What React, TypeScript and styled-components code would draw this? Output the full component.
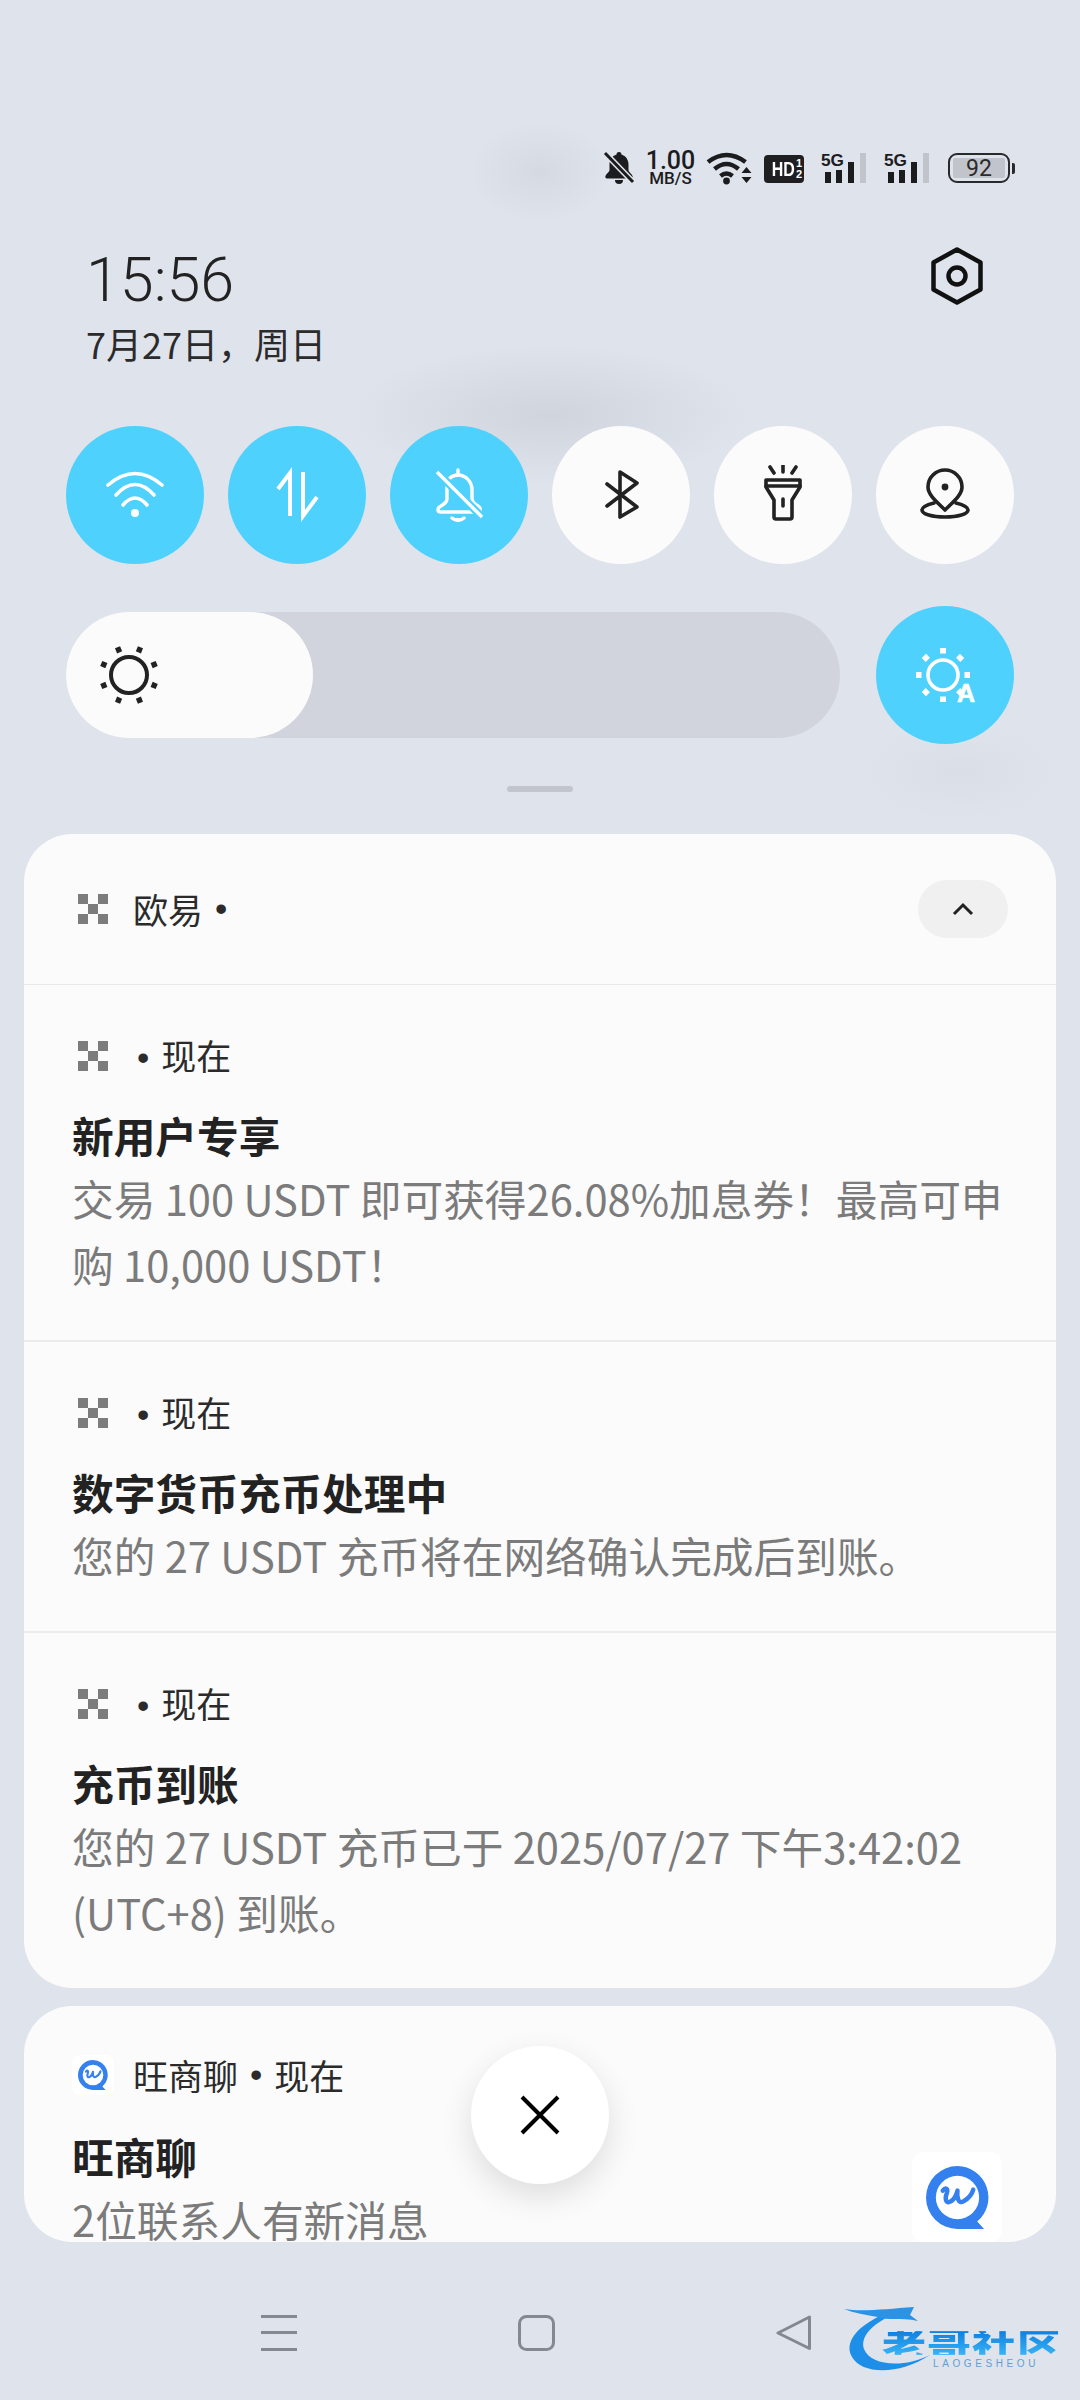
import React from 'react';
import styled, { createGlobalStyle } from 'styled-components';

const GlobalStyle = createGlobalStyle`
    html, body {
        margin: 0;
        padding: 0;
        background: #dfe3eb;
    }
    * {
        box-sizing: border-box;
    }
`;

const CJK = `"Noto Sans CJK SC", "Noto Sans", sans-serif`;

const Page = styled.div`
    position: relative;
    width: 1080px;
    height: 2400px;
    overflow: hidden;
    font-family: ${CJK};
    background:
        radial-gradient(ellipse 70px 50px at 540px 172px, #d5d9e1 0%, rgba(213,217,225,0) 100%),
        radial-gradient(ellipse 200px 70px at 550px 415px, #d0d4dc 0%, rgba(208,212,220,0) 100%),
        radial-gradient(ellipse 100px 50px at 960px 772px, #dadee6 0%, rgba(218,222,230,0) 100%),
        #dfe3eb;
`;

const StatusBar = styled.div`
    display: flex;
    justify-content: flex-end;
    align-items: center;
    gap: 12px;
    height: 36px;
    margin-top: 150px;
    padding-right: 65px;
    color: #1c1c1e;
`;

const Speed = styled.div`
    display: flex;
    flex-direction: column;
    align-items: center;
    width: 47px;
    font-family: Roboto, sans-serif;
    font-weight: 500;
`;

const SpeedValue = styled.span`
    font-size: 25px;
    line-height: 20px;
`;

const SpeedUnit = styled.span`
    font-size: 17px;
    line-height: 15px;
`;

const HdBadge = styled.div`
    display: flex;
    align-items: center;
    justify-content: center;
    width: 40px;
    height: 28px;
    margin-top: 2px;
    border-radius: 4px;
    background: #1f1f21;
    color: #fff;
    font-family: "Liberation Sans", sans-serif;
    font-weight: 700;
`;

const HdText = styled.span`
    font-size: 20px;
    line-height: 1;
    transform: scaleX(0.8);
    transform-origin: right center;
`;

const HdSub = styled.span`
    display: flex;
    flex-direction: column;
    align-items: center;
    font-size: 11px;
    line-height: 11px;
    margin-left: 1px;
`;

const Signal = styled.svg`
    margin-left: 5px;
`;

const Battery = styled.div`
    display: flex;
    align-items: center;
    margin-left: 6px;
`;

const BatteryBody = styled.div`
    display: flex;
    align-items: center;
    justify-content: center;
    width: 62px;
    height: 30px;
    padding: 3px;
    border: 2.5px solid #2a2a2c;
    border-radius: 9px;
`;

const BatteryFill = styled.div`
    display: flex;
    align-items: center;
    justify-content: center;
    width: 100%;
    height: 100%;
    border-radius: 2px;
    background: #c1c4ca;
    color: #2a2a2c;
    font-family: Roboto, sans-serif;
    font-size: 23px;
    line-height: 1;
`;

const BatteryNub = styled.div`
    width: 3px;
    height: 11px;
    margin-left: 2px;
    border-radius: 0 2px 2px 0;
    background: #2a2a2c;
`;

const ClockRow = styled.div`
    display: flex;
    justify-content: space-between;
    height: 240px;
    padding: 64px 97px 0 86px;
`;

const ClockText = styled.div`
    display: flex;
    flex-direction: column;
`;

const Time = styled.div`
    font-family: Roboto, sans-serif;
    font-weight: 300;
    font-size: 61px;
    line-height: 60px;
    color: #222;
`;

const DateLine = styled.div`
    margin-top: 11px;
    font-size: 36px;
    line-height: 44px;
    color: #2b2b2b;
`;

const SettingsIcon = styled.svg`
    margin-top: -3px;
`;

const Toggles = styled.div`
    display: flex;
    gap: 24px;
    padding: 0 66px;
`;

const Toggle = styled.div<{ $on?: boolean }>`
    display: flex;
    align-items: center;
    justify-content: center;
    flex: none;
    width: 138px;
    height: 138px;
    border-radius: 50%;
    background: ${p => (p.$on ? '#4fd1fe' : '#fbfbfb')};
    color: ${p => (p.$on ? '#fff' : '#222')};
`;

const BrightnessRow = styled.div`
    display: flex;
    align-items: center;
    gap: 36px;
    margin-top: 42px;
    padding: 0 66px;
`;

const Slider = styled.div`
    flex: 1;
    height: 126px;
    border-radius: 63px;
    background: #d1d4dc;
`;

const SliderFill = styled.div`
    display: flex;
    align-items: center;
    width: 247px;
    height: 100%;
    padding-left: 33px;
    border-radius: 63px;
    background: #fbfbfb;
    color: #222;
`;

const Handle = styled.div`
    width: 66px;
    height: 6px;
    margin: 42px auto 0;
    border-radius: 3px;
    background: #c2c5cc;
`;

const Cards = styled.div`
    display: flex;
    flex-direction: column;
    gap: 18px;
    margin: 42px 24px 0;
`;

const Card = styled.div<{ $clip?: boolean }>`
    position: relative;
    overflow: hidden;
    border-radius: 48px;
    background: #fbfbfb;
    ${p => p.$clip && 'height: 236px;'}
`;

const GroupHeader = styled.div`
    display: flex;
    align-items: center;
    justify-content: space-between;
    height: 151px;
    padding: 0 48px;
    border-bottom: 1px solid #e9e9e9;
`;

const Collapse = styled.div`
    display: flex;
    align-items: center;
    justify-content: center;
    width: 90px;
    height: 58px;
    border-radius: 29px;
    background: #f0f0f0;
`;

const Notification = styled.div`
    padding: 49px 48px 43px;
    & + & {
        border-top: 2px solid #ececec;
    }
    &:first-of-type {
        padding-bottom: 44px;
    }
`;

const ChatNotification = styled.div`
    padding: 47px 48px 0;
`;

const Meta = styled.div`
    display: flex;
    align-items: center;
    height: 44px;
    font-size: 35px;
    line-height: 44px;
    color: #2b2b2b;
`;

const OkxMark = styled.svg`
    flex: none;
    margin-left: 6px;
`;

const ChatMark = styled.div`
    display: flex;
    align-items: center;
    justify-content: center;
    flex: none;
    width: 42px;
    height: 40px;
    margin-right: 19px;
    background: #fff;
    border-radius: 8px;
`;

const Separator = styled.span`
    font-family: "Liberation Sans", sans-serif;
    margin: 0 12px;
`;

const MetaLabel = styled.span`
    margin-left: 25px;
`;

const MetaTime = styled.span`
    margin-left: 17px;
`;

const Title = styled.div<{ $tight?: boolean }>`
    margin-top: ${p => (p.$tight ? 29 : 27)}px;
    font-size: 41.7px;
    font-weight: 700;
    line-height: 60px;
    color: #222;
`;

const Body = styled.div`
    font-size: 41.7px;
    line-height: 66px;
    color: #7b7b7b;
    white-space: nowrap;
`;

const LargeIcon = styled.div`
    position: absolute;
    right: 54px;
    bottom: 0;
    display: flex;
    align-items: center;
    justify-content: center;
    width: 90px;
    height: 90px;
    border-radius: 12px;
    background: #fff;
`;

const CloseButton = styled.div`
    position: absolute;
    left: 471px;
    top: 2046px;
    display: flex;
    align-items: center;
    justify-content: center;
    width: 138px;
    height: 138px;
    border-radius: 50%;
    background: #fff;
    box-shadow: 0 12px 32px rgba(0, 0, 0, 0.12);
`;

const NavBar = styled.div`
    display: flex;
    justify-content: space-between;
    align-items: center;
    height: 36px;
    margin-top: 73px;
    padding: 0 268px 0 261px;
`;

const Watermark = styled.div`
    position: absolute;
    left: 842px;
    top: 2303px;
    width: 224px;
    height: 76px;
`;

const WatermarkSwoosh = styled.svg`
    position: absolute;
    left: 0;
    top: 0;
`;

const WatermarkText = styled.div`
    position: absolute;
    left: 40px;
    top: 24px;
    width: 184px;
    height: 32px;
    font-size: 44px;
    font-weight: 900;
    line-height: 32px;
    letter-spacing: 1px;
    white-space: nowrap;
    transform: scaleY(0.74);
    background: linear-gradient(180deg, #0f7fe0 0%, #38b4f5 100%);
    -webkit-background-clip: text;
    background-clip: text;
    color: transparent;
`;

const WatermarkSub = styled.div`
    position: absolute;
    left: 91px;
    top: 56px;
    font-family: "Liberation Sans", sans-serif;
    font-size: 10px;
    line-height: 10px;
    letter-spacing: 3.6px;
    color: #5f9fd6;
`;

const Glyph = ({ size = 60, children, stroke = 3.6 }: { size?: number; children: React.ReactNode; stroke?: number }) => (
    <svg width={size} height={size} viewBox="-30 -30 60 60" fill="none" stroke="currentColor" strokeWidth={stroke} strokeLinecap="round" strokeLinejoin="round">
        {children}
    </svg>
);

const WifiGlyph = () => (
    <Glyph>
        <path d="M-27 -10Q0 -33 27 -10" />
        <path d="M-19 0Q0 -21 19 0" />
        <path d="M-12 10Q0 -4 12 10" />
        <circle cx="0" cy="18" r="4" fill="currentColor" stroke="none" />
    </Glyph>
);

const DataGlyph = () => (
    <Glyph stroke={4}>
        <path d="M-7 21V-22L-19 -6" strokeLinecap="butt" strokeLinejoin="miter" />
        <path d="M6 -23V21L20 2" strokeLinecap="butt" strokeLinejoin="miter" />
    </Glyph>
);

const BellOffGlyph = () => (
    <Glyph stroke={3.4}>
        <path d="M-12 -8V4C-12 8 -15 9 -18 11C-22 13 -22 17 -18 17H18C22 17 22 13 19 11C15 9 13 7 13 3V-5C13 -14 6 -20 -1 -20C-4 -20 -7 -19 -9 -17" />
        <path d="M-1 -25V-20" />
        <path d="M-7 23Q-1 28 5 23" fill="currentColor" />
        <path d="M-22 -23L23 22" stroke="#4fd1fe" strokeWidth="8" />
        <path d="M-22 -23L23 22" strokeLinecap="butt" />
    </Glyph>
);

const BluetoothGlyph = () => (
    <Glyph>
        <path d="M-14 -11L16 12L-1 22V-23L16 -12L-14 11" />
    </Glyph>
);

const TorchGlyph = () => (
    <Glyph>
        <path d="M-17 -15H17V-8L9 5V22A2 2 0 0 1 7 24H-7A2 2 0 0 1 -9 22V5L-17 -8Z" />
        <path d="M-17 -9H17" />
        <path d="M0 4V11" />
        <path d="M0 -32V-23" />
        <path d="M-13 -28L-9 -22" />
        <path d="M13 -28L9 -22" />
    </Glyph>
);

const LocationGlyph = () => (
    <Glyph>
        <path d="M0 15C-8 7 -17 0 -17 -8A17 17 0 0 1 17 -8C17 0 8 7 0 15Z" />
        <circle cx="0" cy="-8" r="3.4" fill="currentColor" stroke="none" />
        <path d="M-11 8C-19 10 -23 12 -23 15C-23 19 -13 22 0 22C13 22 23 19 23 15C23 12 19 10 11 8" />
    </Glyph>
);

const rays = (offset: number) => [0, 45, 90, 135, 180, 225, 270, 315].map(a => a + offset);

const SunGlyph = () => (
    <Glyph>
        <circle cx="0" cy="0" r="18" strokeWidth="4" />
        {rays(22.5).map(a => (
            <path key={a} d="M0 -24.5V-30" strokeWidth="5.5" strokeLinecap="butt" transform={`rotate(${a})`} />
        ))}
    </Glyph>
);

const AutoSunGlyph = () => (
    <svg width="72" height="72" viewBox="-34 -36 72 72" fill="none" stroke="currentColor">
        <circle cx="0" cy="0" r="15" strokeWidth="3.6" />
        {rays(0).map(a => (
            <path key={a} d="M0 -21.5V-27" strokeWidth="6" transform={`rotate(${a})`} />
        ))}
        <text x="23" y="27" textAnchor="middle" fill="currentColor" stroke="currentColor" strokeWidth="0.6" fontFamily="Liberation Sans, sans-serif" fontWeight="700" fontSize="25">A</text>
    </svg>
);

const OkxLogo = () => (
    <OkxMark width="30" height="30" viewBox="0 0 30 30" fill="#7c7c7c">
        <rect x="0" y="0" width="10" height="10" />
        <rect x="20" y="0" width="10" height="10" />
        <rect x="10" y="10" width="10" height="10" />
        <rect x="0" y="20" width="10" height="10" />
        <rect x="20" y="20" width="10" height="10" />
    </OkxMark>
);

const ChatLogo = ({ size }: { size: number }) => (
    <svg width={size} height={size} viewBox="0 0 64 64">
        <path d="M32 0A32 32 0 1 0 32 64H59L52 56.5A32 32 0 0 0 32 0Z" fill="#3480ee" />
        <circle cx="32" cy="32" r="22" fill="#fff" />
        <path d="M17 25C20 21 23 23 21 28C19 33 20 39 25 36C29 34 31 29 32 25C31 32 33 39 38 36C43 33 47 28 48 24" fill="none" stroke="#3480ee" strokeWidth="4.5" strokeLinecap="round" strokeLinejoin="round" />
    </svg>
);

const SignalIcon = () => (
    <Signal width="46" height="32" viewBox="0 0 46 32">
        <text x="0" y="13.500" fill="#1c1c1e" fontFamily="Liberation Sans, sans-serif" fontWeight="700" fontSize="17" textLength="23" lengthAdjust="spacingAndGlyphs">5G</text>
        <rect x="4" y="20" width="6" height="11" fill="#1c1c1e" />
        <rect x="15" y="18" width="6" height="13" fill="#1c1c1e" />
        <rect x="27" y="10" width="6" height="21" fill="#1c1c1e" />
        <rect x="39" y="1" width="6" height="30" fill="#c1c4ca" />
    </Signal>
);

const StatusIcons = () => (
    <StatusBar>
        <svg width="32" height="34" viewBox="0 0 30 34">
            <path d="M15 1a2.4 2.4 0 0 1 2.4 2.6C22 5 24.500 9 24.500 13.500V19c0 2 3 3.500 4 6 .5 1.500 0 2.500-1.500 2.500H3C1.500 27.500 1 26.500 1.500 25c1-2.500 4-4 4-6V13.500C5.500 9 8 5 12.600 3.600A2.400 2.400 0 0 1 15 1Z" fill="#1c1c1e" />
            <path d="M11 29h8a4 4 0 0 1-8 0Z" fill="#1c1c1e" />
            <path d="M1 2L29 31" stroke="#dfe3eb" strokeWidth="6" />
            <path d="M1 2L29 31" stroke="#1c1c1e" strokeWidth="3" />
        </svg>
        <Speed>
            <SpeedValue>1.00</SpeedValue>
            <SpeedUnit>MB/S</SpeedUnit>
        </Speed>
        <svg width="46" height="34" viewBox="0 0 45 34" fill="none" stroke="#1c1c1e">
            <path d="M1.500 11Q20 -3 39 11" strokeWidth="4.500" />
            <path d="M8 18Q20 8 32 18" strokeWidth="4.500" />
            <path d="M14 25Q20 20 26 25" strokeWidth="4.500" />
            <circle cx="20" cy="30" r="3.400" fill="#1c1c1e" stroke="none" />
            <path d="M35 22L40 16L45 22Z M35 26L40 32L45 26Z" fill="#1c1c1e" stroke="none" />
        </svg>
        <HdBadge>
            <HdText>HD</HdText>
            <HdSub>
                <span>1</span>
                <span>2</span>
            </HdSub>
        </HdBadge>
        <SignalIcon />
        <SignalIcon />
        <Battery>
            <BatteryBody>
                <BatteryFill>92</BatteryFill>
            </BatteryBody>
            <BatteryNub />
        </Battery>
    </StatusBar>
);

export default function App() {
    return (
        <Page>
            <GlobalStyle />
            <StatusIcons />
            <ClockRow>
                <ClockText>
                    <Time>15:56</Time>
                    <DateLine>7月27日，周日</DateLine>
                </ClockText>
                <SettingsIcon width="52" height="58" viewBox="0 0 52 58" fill="none" stroke="#111" strokeWidth="4.500" strokeLinejoin="round">
                    <path d="M26 2.500L49.500 15.500V42.500L26 55.500L2.500 42.500V15.500Z" />
                    <circle cx="26" cy="29" r="8.500" />
                </SettingsIcon>
            </ClockRow>
            <Toggles>
                <Toggle $on><WifiGlyph /></Toggle>
                <Toggle $on><DataGlyph /></Toggle>
                <Toggle $on><BellOffGlyph /></Toggle>
                <Toggle><BluetoothGlyph /></Toggle>
                <Toggle><TorchGlyph /></Toggle>
                <Toggle><LocationGlyph /></Toggle>
            </Toggles>
            <BrightnessRow>
                <Slider>
                    <SliderFill><SunGlyph /></SliderFill>
                </Slider>
                <Toggle $on><AutoSunGlyph /></Toggle>
            </BrightnessRow>
            <Handle />
            <Cards>
                <Card>
                    <GroupHeader>
                        <Meta>
                            <OkxLogo />
                            <MetaLabel>欧易</MetaLabel>
                            <Separator>•</Separator>
                        </Meta>
                        <Collapse>
                            <svg width="24" height="14" viewBox="0 0 24 14" fill="none" stroke="#222" strokeWidth="3">
                                <path d="M3 12L12 3L21 12" />
                            </svg>
                        </Collapse>
                    </GroupHeader>
                    <Notification>
                        <Meta><OkxLogo /><MetaTime><Separator>•</Separator>现在</MetaTime></Meta>
                        <Title>新用户专享</Title>
                        <Body>交易 100 USDT 即可获得26.08%加息券！最高可申<br />购 10,000 USDT！</Body>
                    </Notification>
                    <Notification>
                        <Meta><OkxLogo /><MetaTime><Separator>•</Separator>现在</MetaTime></Meta>
                        <Title>数字货币充币处理中</Title>
                        <Body>您的 27 USDT 充币将在网络确认完成后到账。</Body>
                    </Notification>
                    <Notification>
                        <Meta><OkxLogo /><MetaTime><Separator>•</Separator>现在</MetaTime></Meta>
                        <Title>充币到账</Title>
                        <Body>您的 27 USDT 充币已于 2025/07/27 下午3:42:02<br />(UTC+8) 到账。</Body>
                    </Notification>
                </Card>
                <Card $clip>
                    <ChatNotification>
                        <Meta>
                            <ChatMark><ChatLogo size={30} /></ChatMark>
                            旺商聊<Separator>•</Separator>现在
                        </Meta>
                        <Title $tight>旺商聊</Title>
                        <Body>2位联系人有新消息</Body>
                    </ChatNotification>
                    <LargeIcon><ChatLogo size={63} /></LargeIcon>
                </Card>
            </Cards>
            <NavBar>
                <svg width="36" height="36" viewBox="0 0 36 36" fill="#85888e">
                    <rect x="0" y="0" width="36" height="3" />
                    <rect x="0" y="16" width="36" height="3" />
                    <rect x="0" y="33" width="36" height="3" />
                </svg>
                <svg width="37" height="36" viewBox="0 0 37 36" fill="none" stroke="#85888e" strokeWidth="3">
                    <rect x="1.500" y="1.500" width="34" height="33" rx="7" />
                </svg>
                <svg width="36" height="36" viewBox="0 0 36 36" fill="none" stroke="#85888e" strokeWidth="3" strokeLinejoin="round">
                    <path d="M33.500 2V33.500L2 18Z" />
                </svg>
            </NavBar>
            <CloseButton>
                <svg width="40" height="40" viewBox="0 0 40 40" stroke="#000" strokeWidth="4">
                    <path d="M2 2L38 38M38 2L2 38" />
                </svg>
            </CloseButton>
            <Watermark>
                <WatermarkSwoosh width="224" height="76" viewBox="0 0 224 76" fill="none">
                    <path d="M40 12C14 24 2 40 10 54C20 72 58 72 88 52C60 66 28 62 22 46C18 34 30 22 46 14Z" fill="#1d8fe8" />
                    <path d="M2 6C20 9 44 6 72 4L68 12L76 18C58 14 46 18 36 14C24 12 12 10 2 6Z" fill="#2a93e6" />
                </WatermarkSwoosh>
                <WatermarkText>老哥社区</WatermarkText>
                <WatermarkSub>LAOGESHEOU</WatermarkSub>
            </Watermark>
        </Page>
    );
}
